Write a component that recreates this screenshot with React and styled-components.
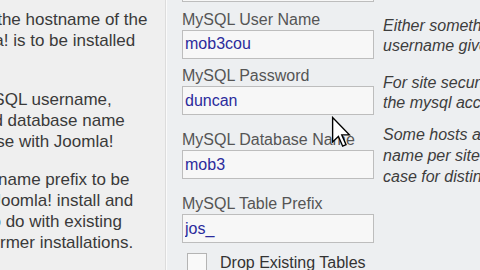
import styled, { createGlobalStyle } from "styled-components";

const GlobalStyle = createGlobalStyle`
  html, body {
    margin: 0;
    padding: 0;
  }
  body {
    width: 480px;
    height: 270px;
    overflow: hidden;
    background: #edeff1;
    font-family: "Liberation Sans", Arial, sans-serif;
  }
`;

const Page = styled.div`
  position: relative;
  display: flex;
  width: 480px;
  height: 270px;
  overflow: hidden;
`;

const HelpPanel = styled.div`
  flex: 0 0 165px;
  background: #efefef;
  border-right: 1px solid #dcdcdc;
  overflow: hidden;
  padding-top: 9px;
`;

const HelpText = styled.p`
  margin: 0 0 17px -103px;
  font-size: 17px;
  line-height: 21px;
  color: #3a3a3a;
  white-space: nowrap;
`;

// the form is scrolled a bit: only the bottom of the host row shows
const FormArea = styled.div`
  flex: 1;
  min-width: 0;
  margin-top: -46px;
  padding-left: 15px;
  border-left: 1px solid #fafafa;
  display: flex;
  flex-direction: column;
  gap: 8.5px;
`;

const Row = styled.div`
  display: grid;
  grid-template-columns: 192px 1fr;
  column-gap: 9px;
  align-items: center;
`;

const Field = styled.div`
  display: flex;
  flex-direction: column;
`;

const Label = styled.label`
  font-size: 16px;
  line-height: 18px;
  margin-bottom: 1px;
  color: #555;
  white-space: nowrap;
`;

const TextInput = styled.input`
  box-sizing: border-box;
  width: 100%;
  height: 29px;
  margin: 0;
  padding: 0 2px;
  border: 1px solid #bdbdbd;
  background: #f7f7f7;
  font-family: "Liberation Sans", Arial, sans-serif;
  font-size: 16px;
  color: #2b2b9c;
  outline: none;
`;

const Description = styled.div`
  padding-top: ${(p) => (p.$tall ? "0" : "3px")};
  font-size: 16px;
  font-style: italic;
  line-height: ${(p) => (p.$tall ? "21px" : "20px")};
  color: #3d3d3d;
  white-space: nowrap;
`;

const CheckRow = styled.div`
  display: flex;
  align-items: center;
  gap: 13px;
  margin: 1px 0 0 5px;
`;

const CheckBox = styled.input`
  appearance: none;
  box-sizing: border-box;
  width: 20px;
  height: 20px;
  margin: 0;
  border: 1px solid #b4b4b4;
  background: #f9f9f9;
`;

const CheckLabel = styled.span`
  font-size: 16px;
  color: #333;
  white-space: nowrap;
`;

const Cursor = styled.svg`
  position: absolute;
  left: 331px;
  top: 116px;
`;

const rows = [
  { label: "Host Name", value: "localhost", desc: ["This is usually 'localhost'"] },
  { label: "MySQL User Name", value: "mob3cou", desc: ["Either something as 'root' or a", "username given by the hoster"] },
  { label: "MySQL Password", value: "duncan", desc: ["For site security using a password for", "the mysql account in mandatory"] },
  {
    label: "MySQL Database Name",
    value: "mob3",
    desc: ["Some hosts allow only a certain DB", "name per site. Use table prefix in this", "case for distinct Joomla! sites."],
  },
  { label: "MySQL Table Prefix", value: "jos_", desc: [] },
];

const help = [
  ["Please enter the hostname of the", "server Joomla! is to be installed", "on."],
  ["Enter the MySQL username,", "password and database name", "you wish to use with Joomla!"],
  ["Enter a table name prefix to be", "used by this Joomla! install and", "select what to do with existing", "tables from former installations."],
];

export default function App() {
  return (
    <>
      <GlobalStyle />
      <Page>
        <HelpPanel>
          {help.map((lines, i) => (
            <HelpText key={i}>
              {lines.map((l, j) => (
                <span key={j}>
                  {l}
                  <br />
                </span>
              ))}
            </HelpText>
          ))}
        </HelpPanel>
        <FormArea>
          {rows.map((r) => (
            <Row key={r.label}>
              <Field>
                <Label>{r.label}</Label>
                <TextInput type="text" value={r.value} readOnly />
              </Field>
              <Description $tall={r.desc.length > 2}>
                {r.desc.map((d, j) => (
                  <span key={j}>
                    {d}
                    <br />
                  </span>
                ))}
              </Description>
            </Row>
          ))}
          <CheckRow>
            <CheckBox type="checkbox" readOnly />
            <CheckLabel>Drop Existing Tables</CheckLabel>
          </CheckRow>
        </FormArea>
        <Cursor width="20" height="32" viewBox="0 0 13 21">
          <path
            d="M1 1 L1 17 L4.8 13.4 L7.6 19.8 L9.8 18.8 L7 12.4 L12 12.4 Z"
            fill="#fff"
            stroke="#000"
            strokeWidth="0.9"
            strokeLinejoin="miter"
          />
        </Cursor>
      </Page>
    </>
  );
}
